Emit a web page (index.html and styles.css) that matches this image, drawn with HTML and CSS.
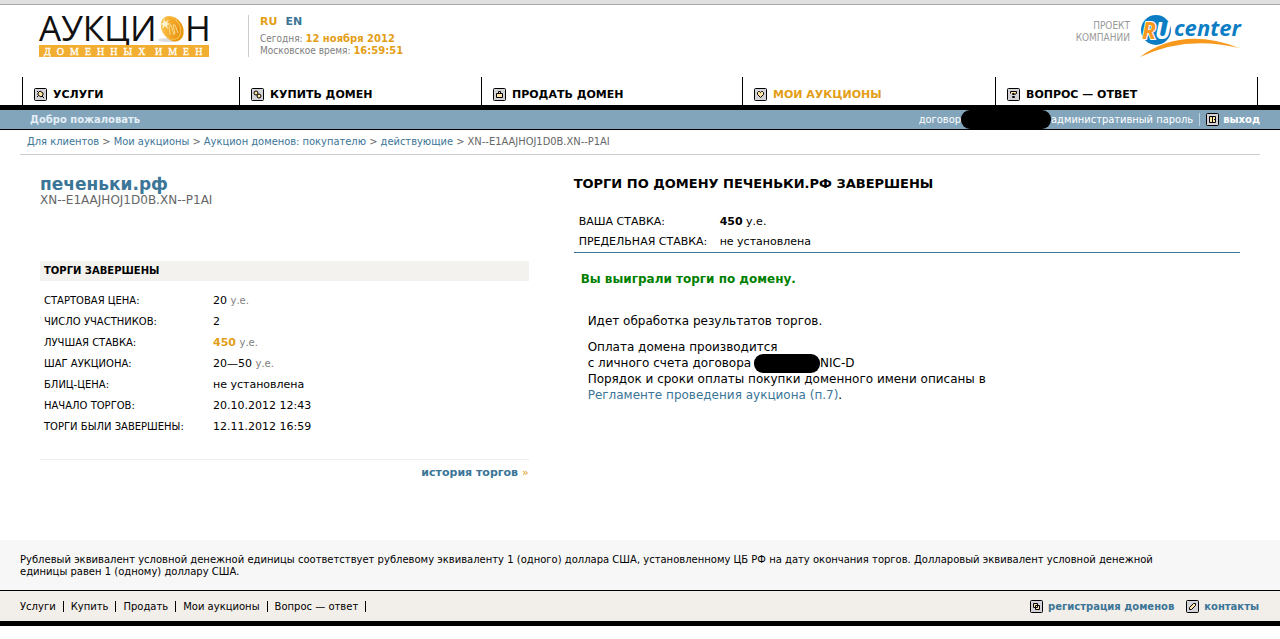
FILE: index.html
```
<!DOCTYPE html>
<html lang="ru">
<head>
    <meta charset="UTF-8">
    <meta name="viewport" content="width=device-width, initial-scale=1.0">
    <title>Аукцион доменных имен</title>
    <link rel="stylesheet" href="styles.css">
</head>
<body>
    <header class="header">
        <a href="#" class="logo">
            <svg width="172" height="44" viewBox="0 0 172 44">
                <defs>
                    <linearGradient id="coin" x1="0" y1="0" x2="1" y2="1">
                        <stop offset="0" stop-color="#fdd067"/>
                        <stop offset="0.5" stop-color="#f3a926"/>
                        <stop offset="1" stop-color="#e08a0c"/>
                    </linearGradient>
                </defs>
                <text x="0" y="26" class="logo-text">АУКЦИ</text>
                <text x="146" y="26" class="logo-text">Н</text>
                <ellipse cx="129" cy="25" rx="10" ry="2" fill="#ddd"/>
                <ellipse cx="134" cy="14" rx="10" ry="13" transform="rotate(-28 134 14)" fill="#e8980f"/>
                <ellipse cx="132" cy="13" rx="9" ry="12" transform="rotate(-28 132 13)" fill="url(#coin)" stroke="#f9c04e"/>
                <path d="M131 20l-1-9 2-1 3 10M136 19l-2-9 2 0 3 8" fill="none" stroke="#fbd98c"/>
                <path d="M125 3l1 4 4-2-2 3 4 1-4 1 1 4-3-3-3 3 1-4-4-1 4-1z" fill="#fff3d0"/>
                <rect y="30" width="170" height="12" fill="#f2ae30"/>
                <text x="5" y="40" class="logo-sub">ДОМЕННЫХ</text>
                <text x="116" y="40" class="logo-sub">ИМЕН</text>
            </svg>
        </a>
        <div class="info">
            <div class="lang"><a href="#" class="current">RU</a><a href="#">EN</a></div>
            <div>Сегодня: <b>12 ноября 2012</b></div>
            <div>Московское время: <b>16:59:51</b></div>
        </div>
        <div class="company">
            <span>ПРОЕКТ<br>КОМПАНИИ</span>
            <a href="#">
                <svg width="102" height="44" viewBox="0 0 102 44">
                    <circle cx="16" cy="15" r="15" fill="#0b7dc4"/>
                    <text x="15" y="24" class="ru-u">U</text>
                    <text x="2" y="24" class="ru-r">R</text>
                    <text x="34" y="21" class="ru-center">center</text>
                    <path d="M0 42Q42 11 99 33Q46 20 0 42z" fill="#f8981d"/>
                </svg>
            </a>
        </div>
    </header>

    <nav class="nav">
        <a href="#">
            <svg class="icon" viewBox="0 0 13 13"><rect x=".5" y=".5" width="12" height="12" rx="1"/><path d="M4 5l2-2 3 2v2l-2 2-3-2zM8 8l2 2M3 3l1 1M3 9l1-1"/></svg>
            УСЛУГИ
        </a>
        <a href="#">
            <svg class="icon" viewBox="0 0 13 13"><rect x=".5" y=".5" width="12" height="12" rx="1"/><circle cx="8" cy="8" r="2"/><circle cx="5" cy="5" r="2"/></svg>
            КУПИТЬ ДОМЕН
        </a>
        <a href="#">
            <svg class="icon" viewBox="0 0 13 13"><rect x=".5" y=".5" width="12" height="12" rx="1"/><path d="M3.500 5.500h6v4h-6zM5.500 5.500v-2h2v2"/></svg>
            ПРОДАТЬ ДОМЕН
        </a>
        <a href="#" class="current">
            <svg class="icon" viewBox="0 0 13 13"><rect x=".5" y=".5" width="12" height="12" rx="1"/><path d="M6.500 9.500l-3-3v-2l1-1h1l1 1 1-1h1l1 1v2z"/></svg>
            МОИ АУКЦИОНЫ
        </a>
        <a href="#">
            <svg class="icon" viewBox="0 0 13 13"><rect x=".5" y=".5" width="12" height="12" rx="1"/><path d="M3.500 5.500v-2h6v2l-2 1h-2v-1h2M5.500 8.500h2v1h-2z"/></svg>
            ВОПРОС — ОТВЕТ
        </a>
    </nav>

    <div class="userbar">
        <b>Добро пожаловать</b>
        <div class="account">
            <span>договор</span>
            <span class="mask"></span>
            <span>административный пароль</span>
            <a href="#" class="exit">
                <svg class="icon" viewBox="0 0 13 13"><rect x=".5" y=".5" width="12" height="12" rx="1"/><path d="M3.500 3.500h6v6h-6zM6.500 3.500v6M8.500 6v1"/></svg>
                выход
            </a>
        </div>
    </div>

    <div class="crumbs">
        <a href="#">Для клиентов</a> &gt; <a href="#">Мои аукционы</a> &gt; <a href="#">Аукцион доменов: покупателю</a> &gt; <a href="#">действующие</a> &gt; XN--E1AAJHOJ1D0B.XN--P1AI
    </div>

    <main class="content">
        <section>
            <h1>печеньки.рф</h1>
            <div class="punycode">XN--E1AAJHOJ1D0B.XN--P1AI</div>
            <h2>ТОРГИ ЗАВЕРШЕНЫ</h2>
            <table class="lot">
                <tr><th>СТАРТОВАЯ ЦЕНА:</th><td>20 <small>у.е.</small></td></tr>
                <tr><th>ЧИСЛО УЧАСТНИКОВ:</th><td>2</td></tr>
                <tr><th>ЛУЧШАЯ СТАВКА:</th><td><b>450</b> <small>у.е.</small></td></tr>
                <tr><th>ШАГ АУКЦИОНА:</th><td>20—50 <small>у.е.</small></td></tr>
                <tr><th>БЛИЦ-ЦЕНА:</th><td>не установлена</td></tr>
                <tr><th>НАЧАЛО ТОРГОВ:</th><td>20.10.2012 12:43</td></tr>
                <tr><th>ТОРГИ БЫЛИ ЗАВЕРШЕНЫ:</th><td>12.11.2012 16:59</td></tr>
            </table>
            <div class="history"><a href="#">история торгов</a> <span>»</span></div>
        </section>

        <section>
            <h3>ТОРГИ ПО ДОМЕНУ ПЕЧЕНЬКИ.РФ ЗАВЕРШЕНЫ</h3>
            <table class="bid">
                <tr><th>ВАША СТАВКА:</th><td><b>450</b> у.е.</td></tr>
                <tr><th>ПРЕДЕЛЬНАЯ СТАВКА:</th><td>не установлена</td></tr>
            </table>
            <div class="won">Вы выиграли торги по домену.</div>
            <div class="payment">
                <p>Идет обработка результатов торгов.</p>
                <p>Оплата домена производится<br>
                с личного счета договора <span class="mask mask-small"></span>NIC-D<br>
                Порядок и сроки оплаты покупки доменного имени описаны в<br>
                <a href="#">Регламенте проведения аукциона (п.7)</a>.</p>
            </div>
        </section>
    </main>

    <div class="note">Рублевый эквивалент условной денежной единицы соответствует рублевому эквиваленту 1 (одного) доллара США, установленному ЦБ РФ на дату окончания торгов. Долларовый эквивалент условной денежной единицы равен 1 (одному) доллару США.</div>

    <footer class="footer">
        <div class="footer-menu">
            <a href="#">Услуги</a><a href="#">Купить</a><a href="#">Продать</a><a href="#">Мои аукционы</a><a href="#">Вопрос — ответ</a>
        </div>
        <div class="footer-links">
            <a href="#">
                <svg class="icon" viewBox="0 0 13 13"><rect x=".5" y=".5" width="12" height="12" rx="1"/><path d="M5.500 5.500h4v4h-4zM3.500 3.500h4v4h-4z"/></svg>
                регистрация доменов
            </a>
            <a href="#">
                <svg class="icon" viewBox="0 0 13 13"><rect x=".5" y=".5" width="12" height="12" rx="1"/><path d="M3.500 9.500v-2l4-4h2v2l-4 4z"/></svg>
                контакты
            </a>
        </div>
    </footer>
</body>
</html>
```
FILE: styles.css
```
body {
    margin: 0;
    border-top: 4px solid #e0e0e0;
    background: #fff;
    color: #000;
    font-family: "DejaVu Sans", Verdana, sans-serif;
    font-size: 11px;
}
a {
    color: #3b7597;
    text-decoration: none;
}
a:hover {
    text-decoration: underline;
}
h1, h2, h3, p {
    margin: 0;
}
table {
    border-spacing: 0;
}
td, th {
    padding: 0;
}
th {
    text-align: left;
    font-weight: normal;
}

/* header */
.header {
    display: flex;
    align-items: flex-start;
    height: 62px;
    padding: 10px 38px 0 39px;
    border-top: 1px solid #aaa;
}
.header svg {
    display: block;
    overflow: visible;
}
.logo-text {
    font: 35px "Open Sans", sans-serif;
    fill: #111;
}
.logo-sub {
    font: 10px "Liberation Serif", serif;
    letter-spacing: 6px;
    fill: #fff;
    stroke: #fff;
    stroke-width: .3px;
}
.info {
    margin-left: 37px;
    padding-left: 11px;
    border-left: 1px solid #ccc;
    color: #808080;
    font-family: "DejaVu Sans Condensed", Tahoma, sans-serif;
    font-size: 10px;
    line-height: 12px;
}
.info b {
    color: #e39e17;
    font-family: "DejaVu Sans", Verdana, sans-serif;
}
.lang {
    display: flex;
    gap: 8px;
    margin-bottom: 4px;
    font-family: "DejaVu Sans", Verdana, sans-serif;
    font-size: 11px;
    font-weight: bold;
    line-height: 14px;
}
.lang .current, .nav .current {
    color: #e39e17;
}
.company {
    display: flex;
    gap: 10px;
    margin-left: auto;
    color: #999;
    font-family: "DejaVu Sans Condensed", Tahoma, sans-serif;
    font-size: 10px;
    line-height: 12px;
    text-align: right;
}
.company span {
    padding-top: 5px;
}
.ru-r, .ru-u {
    font: italic bold 23px "Open Sans", sans-serif;
    fill: #f8981d;
    stroke: #fff;
    paint-order: stroke;
    stroke-width: 2px;
}
.ru-u {
    fill: #fff;
    stroke: none;
}
.ru-center {
    font: italic bold 22px "Open Sans", sans-serif;
    fill: #0b7dc4;
}

/* main menu */
.nav {
    display: grid;
    grid-template-columns: 217fr 242fr 261fr 253fr 262fr;
    margin: 0 22px;
    border-right: 1px solid #000;
}
.nav a {
    display: flex;
    align-items: center;
    gap: 6px;
    height: 21px;
    padding: 7px 0 0 11px;
    border-left: 1px solid #000;
    color: #000;
    font-weight: bold;
}
.icon {
    flex: none;
    width: 13px;
    height: 13px;
    fill: #ffe3a3;
    stroke: #000;
}
.icon rect {
    fill: #d4d4d8;
}

.userbar {
    display: flex;
    justify-content: space-between;
    align-items: center;
    height: 19px;
    padding: 0 20px 0 30px;
    border-top: 5px solid #000;
    border-bottom: 1px solid #000;
    background: #82a5bc;
    color: #e4eef5;
    font-size: 10px;
}
.account {
    display: flex;
    align-items: center;
    color: #fff;
    font-family: "DejaVu Sans Condensed", Tahoma, sans-serif;
    font-size: 11px;
}
.mask {
    display: inline-block;
    width: 90px;
    height: 19px;
    border-radius: 9px;
    background: #000;
}
.mask-small {
    width: 66px;
    margin: -4px 0 -4px -1px;
    vertical-align: middle;
}
.exit {
    display: flex;
    align-items: center;
    gap: 4px;
    margin-left: 6px;
    padding-left: 6px;
    border-left: 1px solid #b9d3e2;
    color: #fff;
    font-family: "DejaVu Sans", Verdana, sans-serif;
    font-size: 10px;
    font-weight: bold;
    line-height: 11px;
}

.crumbs {
    margin: 0 20px;
    padding: 4px 7px;
    border-bottom: 1px solid #ccc;
    color: #666;
    font-family: "DejaVu Sans Condensed", Tahoma, sans-serif;
    line-height: 16px;
}

/* lot page */
.content {
    display: grid;
    grid-template-columns: 11fr 15fr;
    gap: 45px;
    padding: 19px 40px 59px;
}
h1 {
    color: #3b7597;
    font-size: 17px;
    line-height: 20px;
}
.punycode {
    color: #666;
    font-size: 12px;
    line-height: 12px;
}
h2 {
    margin: 55px 0 9px;
    padding: 0 4px;
    background: #f3f2ee;
    font-size: 10px;
    line-height: 20px;
}
.lot th {
    width: 169px;
    padding-left: 4px;
    font-size: 10px;
    line-height: 21px;
}
.lot b {
    color: #e39e17;
}
.lot small {
    color: #808080;
    font-size: 10px;
}
.history {
    margin-top: 22px;
    padding-top: 5px;
    border-top: 1px solid #eee;
    font-weight: bold;
    line-height: 16px;
    text-align: right;
}
.history span {
    color: #e39e17;
    font-weight: normal;
}
h3 {
    font-size: 13px;
    line-height: 20px;
}
.bid {
    width: 100%;
    margin-top: 18px;
    border-bottom: 1px solid #3b7597;
    line-height: 20px;
}
.bid th {
    width: 141px;
    padding-left: 5px;
}
.won {
    margin: 18px 7px 0;
    color: #008000;
    font-size: 12px;
    font-weight: bold;
    line-height: 16px;
}
.payment {
    margin: 26px 14px 0;
    font-size: 12px;
    line-height: 16px;
}
.payment p {
    margin-bottom: 10px;
}

/* footer */
.note {
    padding: 14px 80px 12px 20px;
    background: #f7f7f7;
    font-size: 10px;
    line-height: 12px;
}
.footer {
    display: flex;
    justify-content: space-between;
    align-items: center;
    height: 30px;
    padding: 0 21px 0 20px;
    border-top: 1px solid #000;
    border-bottom: 5px solid #000;
    background: #f2eee9;
    font-size: 10px;
}
.footer-menu {
    display: flex;
    gap: 7px;
}
.footer-menu a {
    padding-right: 7px;
    border-right: 1px solid #000;
    color: #000;
    line-height: 11px;
}
.footer-links {
    display: flex;
    gap: 12px;
    font-weight: bold;
}
.footer-links a {
    display: flex;
    align-items: center;
    gap: 5px;
}
```
